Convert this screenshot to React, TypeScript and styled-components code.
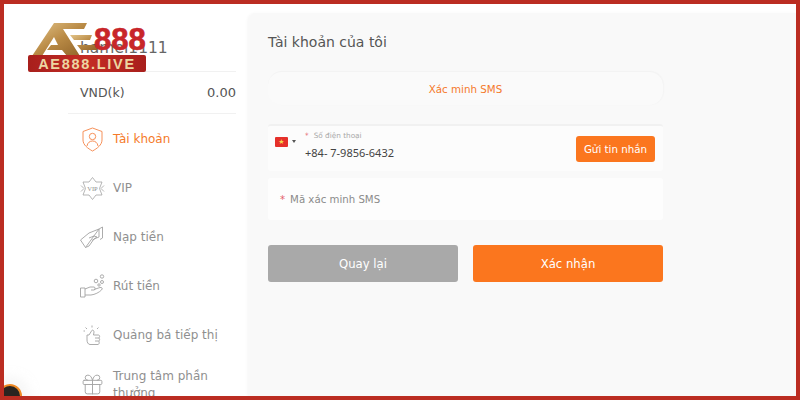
import React from 'react';
import styled, {createGlobalStyle} from 'styled-components';
import {Gift} from 'lucide-react';

const GlobalStyle = createGlobalStyle`
  html, body {
    margin: 0;
    padding: 0;
    width: 800px;
    height: 400px;
    overflow: hidden;
    background: #fff;
    font-family: "DejaVu Sans", "Noto Sans", sans-serif;
  }
  * {
    box-sizing: border-box;
  }
`;

const Frame = styled.div`
  position: relative;
  display: flex;
  width: 800px;
  height: 400px;
  border: 4px solid #bb2d22;
  background: #fff;
  overflow: hidden;
`;

const Sidebar = styled.aside`
  flex: 0 0 244px;
  display: flex;
  flex-direction: column;
  padding: 33px 12px 0 64px;
  & > * {
    flex-shrink: 0;
  }
`;

const UserName = styled.div`
  height: 34px;
  padding-left: 12px;
  font-size: 15.500px;
  line-height: 22px;
  color: #666;
`;

const Balance = styled.div`
  display: flex;
  justify-content: space-between;
  align-items: center;
  height: 43px;
  padding: 0 0 0 12px;
  border-top: 1px solid #f1f1f1;
  border-bottom: 1px solid #f1f1f1;
  font-size: 12.500px;
  color: #555;
`;

const BalanceValue = styled.span`
  font-size: 13px;
`;

const Menu = styled.nav`
  display: flex;
  flex-direction: column;
  margin-top: 1px;
`;

const MenuItem = styled.div<{$active?: boolean}>`
  flex: 0 0 49px;
  display: flex;
  align-items: center;
  gap: 8px;
  padding-left: 12px;
  font-size: 12px;
  line-height: 17px;
  color: ${(props) => props.$active ? '#f57a2a' : '#8f8f8f'};
  & svg {
    flex: 0 0 25px;
  }
`;

const Main = styled.main`
  flex: 1;
  margin-top: 9px;
  padding: 18px 0 0 20px;
  background: #f9f9f9;
  border-radius: 8px 0 0 0;
  box-shadow: -1px 0 3px rgba(0, 0, 0, 0.03);
`;

const Title = styled.h1`
  margin: 0 0 18px;
  font-size: 14px;
  font-weight: 400;
  line-height: 22px;
  color: #555;
`;

const Content = styled.div`
  display: flex;
  flex-direction: column;
  width: 395px;
`;

const TabCard = styled.div`
  display: flex;
  justify-content: center;
  align-items: center;
  height: 34px;
  margin-bottom: 19px;
  border-top: 1px solid #f3f3f3;
  border-radius: 14px;
  background: #fafafa;
  box-shadow: 1px 0 1px #f4f4f4;
  font-size: 10.300px;
  color: #f5792a;
`;

const PhoneField = styled.div`
  display: flex;
  align-items: center;
  height: 47px;
  margin-bottom: 7px;
  padding: 0 8px 0 7px;
  border-top: 2px solid #f1f1f1;
  border-radius: 3px;
  background: #fcfcfc;
`;

const FlagPicker = styled.div`
  display: flex;
  align-items: center;
  gap: 4px;
  margin: 0 9px 14px 0;
`;

const Flag = styled.div`
  display: flex;
  justify-content: center;
  align-items: center;
  width: 13px;
  height: 10px;
  border-radius: 1px;
  background: #e5302a;
  color: #f6d64a;
  font-size: 7px;
  line-height: 10px;
`;

const Caret = styled.div`
  width: 0;
  height: 0;
  border-left: 2.500px solid transparent;
  border-right: 2.500px solid transparent;
  border-top: 3px solid #555;
`;

const PhoneInfo = styled.div`
  flex: 1;
  display: flex;
  flex-direction: column;
  gap: 3px;
  margin-bottom: 6px;
`;

const TinyLabel = styled.div`
  font-size: 7.300px;
  line-height: 12px;
  color: #a8a8a8;
`;

const Star = styled.span`
  margin-right: 5px;
  color: #e4606a;
`;

const PhoneNumber = styled.div`
  font-family: "Noto Sans", sans-serif;
  font-size: 11px;
  line-height: 16px;
  color: #444;
`;

const SendButton = styled.button`
  width: 79px;
  height: 26px;
  padding: 0;
  border: 0;
  border-radius: 3px;
  background: #fb761e;
  color: #fff;
  font-family: inherit;
  font-size: 10.300px;
`;

const CodeField = styled.div`
  display: flex;
  align-items: center;
  height: 42px;
  margin-bottom: 25px;
  padding-left: 12px;
  border-radius: 3px;
  background: #fdfdfd;
  font-size: 10.200px;
  color: #8b8b8b;
`;

const Actions = styled.div`
  display: flex;
  justify-content: space-between;
`;

const ActionButton = styled.button<{$primary?: boolean}>`
  width: 190px;
  height: 37px;
  padding: 0;
  border: 0;
  border-radius: 3px;
  background: ${(props) => props.$primary ? '#fb761e' : '#a9a9a9'};
  color: #fff;
  font-family: inherit;
  font-size: 11.700px;
`;

const Logo = styled.div`
  position: absolute;
  left: 23px;
  top: 15px;
  width: 124px;
  height: 57px;
`;

const LogoMark = styled.svg`
  position: absolute;
  left: 0;
  top: 0;
`;

const LogoNumber = styled.div`
  position: absolute;
  left: 67px;
  top: 5px;
  font-family: "Liberation Sans", sans-serif;
  font-size: 31px;
  font-weight: 700;
  line-height: 31px;
  color: #c8262a;
  -webkit-text-stroke: 0.6px #c8262a;
`;

const LogoBadge = styled.div`
  position: absolute;
  left: 1px;
  top: 36px;
  display: flex;
  justify-content: center;
  align-items: center;
  width: 118px;
  height: 17px;
  border-radius: 2px;
  background: linear-gradient(90deg, #a81f1c, #c42c25 50%, #a81f1c);
  color: #edd5a2;
  font-family: "Liberation Sans", sans-serif;
  font-size: 14.500px;
  font-weight: 700;
  letter-spacing: 1.700px;
  white-space: nowrap;
`;

const CornerBadge = styled.div`
  position: absolute;
  left: -6px;
  bottom: -12px;
  width: 24px;
  height: 24px;
  border-radius: 50%;
  background: #2a2420;
  border: 2px solid #ef8a25;
  box-shadow: 0 0 10px 8px rgba(240, 240, 240, 0.5);
`;

const ShieldIcon = () => (
    <svg width="25" height="25" viewBox="0 0 25 25" fill="none" stroke="#f6915a" strokeWidth="1">
        <path d="M12.500 1 L22 4.500 V13 C22 18 17 21.500 12.500 24 C8 21.500 3 18 3 13 V4.500 Z"/>
        <circle cx="12.500" cy="9.500" r="3.200"/>
        <path d="M7 19 C7.500 15.500 10 14 12.500 14 C15 14 17.500 15.500 18 19"/>
    </svg>
);

const VipIcon = () => (
    <svg width="25" height="25" viewBox="0 0 25 25" fill="none" stroke="#a3a3a3" strokeWidth="0.8">
        <path d="M12.500 1.500 L16 6 H22 L19.500 12.500 L22 19 H16 L12.500 23.500 L9 19 H3 L5.500 12.500 L3 6 H9 Z"/>
        <path d="M1 9.500 L4 12.500 L1 15.500 M24 9.500 L21 12.500 L24 15.500"/>
        <text x="12.500" y="14.500" fontSize="6.500" fontFamily="Liberation Serif" textAnchor="middle" fill="#8f8f8f" stroke="none">VIP</text>
    </svg>
);

const DepositIcon = () => (
    <svg width="25" height="25" viewBox="0 0 25 25" fill="none" stroke="#a3a3a3" strokeWidth="0.9" strokeLinejoin="round">
        <path d="M0.500 15 L9 8 L19 4 L22.500 2 V13 L20 14.500"/>
        <path d="M19 4 V12 L14 14 L9 21 L5.500 22.500 Z"/>
        <path d="M9 13 L14 11 L17 12 L12 15.500"/>
        <path d="M0.500 15 L5.500 22.500"/>
    </svg>
);

const WithdrawIcon = () => (
    <svg width="25" height="25" viewBox="0 0 25 25" fill="none" stroke="#a3a3a3" strokeWidth="0.9" strokeLinejoin="round">
        <path d="M0.500 14 H5 V23 H0.500 Z"/>
        <path d="M5 15 L10 13 H14 C15.500 13 15.500 16 14 16 H11"/>
        <path d="M14 15.500 L20 13.500 C22 13 23 14.500 21.500 16 C19 18.500 15 20.500 11 21 H5"/>
        <circle cx="16" cy="7" r="1.800"/>
        <circle cx="19" cy="11" r="1.200"/>
        <circle cx="22" cy="2.500" r="1.700"/>
        <circle cx="22" cy="8" r="1.500"/>
    </svg>
);

const PromoIcon = () => (
    <svg width="25" height="25" viewBox="0 0 25 25" fill="none" stroke="#a3a3a3" strokeWidth="0.9" strokeLinejoin="round">
        <path d="M7 12 H9 L11.500 8 C12 6.500 14 7 14 9 L13.500 12 H18.500 C20 12 20 15 18.500 15 C20 15 20 18 18.500 18 C19.500 18 19.500 21.500 18 21.500 H10 C8 21.500 7 19 7 17 Z"/>
        <path d="M15 15 H18.500 M15 18 H18.500"/>
        <path d="M12 2.500 V4.500 M5.500 4.500 L7 6 M18.500 4.500 L17 6 M3.500 8 H5"/>
    </svg>
);

const App: React.FC = () => {
    return (
        <>
            <GlobalStyle/>
            <Frame>
                <Sidebar>
                    <UserName>hamel1111</UserName>
                    <Balance>
                        <span>VND(k)</span>
                        <BalanceValue>0.00</BalanceValue>
                    </Balance>
                    <Menu>
                        <MenuItem $active><ShieldIcon/>Tài khoản</MenuItem>
                        <MenuItem><VipIcon/>VIP</MenuItem>
                        <MenuItem><DepositIcon/>Nạp tiền</MenuItem>
                        <MenuItem><WithdrawIcon/>Rút tiền</MenuItem>
                        <MenuItem><PromoIcon/>Quảng bá tiếp thị</MenuItem>
                        <MenuItem><Gift size={25} strokeWidth={0.9} color="#a3a3a3"/>Trung tâm phần<br/>thưởng</MenuItem>
                    </Menu>
                </Sidebar>
                <Main>
                    <Title>Tài khoản của tôi</Title>
                    <Content>
                        <TabCard>Xác minh SMS</TabCard>
                        <PhoneField>
                            <FlagPicker>
                                <Flag>★</Flag>
                                <Caret/>
                            </FlagPicker>
                            <PhoneInfo>
                                <TinyLabel><Star>*</Star>Số điện thoại</TinyLabel>
                                <PhoneNumber>+84- 7-9856-6432</PhoneNumber>
                            </PhoneInfo>
                            <SendButton>Gửi tin nhắn</SendButton>
                        </PhoneField>
                        <CodeField><Star>*</Star>Mã xác minh SMS</CodeField>
                        <Actions>
                            <ActionButton>Quay lại</ActionButton>
                            <ActionButton $primary>Xác nhận</ActionButton>
                        </Actions>
                    </Content>
                </Main>
                <Logo>
                    <LogoMark width="80" height="40" viewBox="0 0 80 40">
                        <defs>
                            <linearGradient id="gold" x1="0" y1="0" x2="1" y2="1">
                                <stop offset="0" stopColor="#e3c489"/>
                                <stop offset="0.5" stopColor="#b98a45"/>
                                <stop offset="1" stopColor="#8e6128"/>
                            </linearGradient>
                        </defs>
                        <path d="M5 37 L27 4 H60 L57 10 H36 L53 37 H40 L35 31 H20 L24 26 H31 L27 18 L15 37 Z" fill="url(#gold)"/>
                        <path d="M43 16 H65 L63 21 H47 Z M50 26 H72 L70 31 H54 Z" fill="url(#gold)"/>
                    </LogoMark>
                    <LogoNumber>888</LogoNumber>
                    <LogoBadge>AE888.LIVE</LogoBadge>
                </Logo>
                <CornerBadge/>
            </Frame>
        </>
    );
};

export default App;
